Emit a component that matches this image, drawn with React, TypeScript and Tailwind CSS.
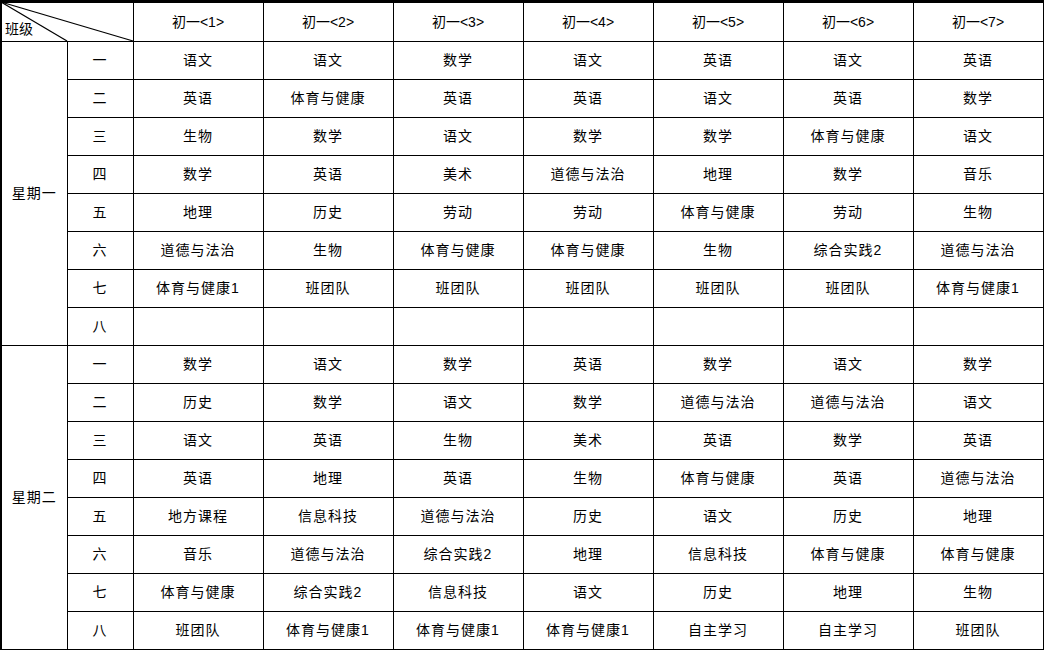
import React from "react";

const classes = ["初一<1>", "初一<2>", "初一<3>", "初一<4>", "初一<5>", "初一<6>", "初一<7>"];
const periods = ["一", "二", "三", "四", "五", "六", "七", "八"];

const schedule: { day: string; rows: string[][] }[] = [
  {
    day: "星期一",
    rows: [
      ["语文", "语文", "数学", "语文", "英语", "语文", "英语"],
      ["英语", "体育与健康", "英语", "英语", "语文", "英语", "数学"],
      ["生物", "数学", "语文", "数学", "数学", "体育与健康", "语文"],
      ["数学", "英语", "美术", "道德与法治", "地理", "数学", "音乐"],
      ["地理", "历史", "劳动", "劳动", "体育与健康", "劳动", "生物"],
      ["道德与法治", "生物", "体育与健康", "体育与健康", "生物", "综合实践2", "道德与法治"],
      ["体育与健康1", "班团队", "班团队", "班团队", "班团队", "班团队", "体育与健康1"],
      ["", "", "", "", "", "", ""],
    ],
  },
  {
    day: "星期二",
    rows: [
      ["数学", "语文", "数学", "英语", "数学", "语文", "数学"],
      ["历史", "数学", "语文", "数学", "道德与法治", "道德与法治", "语文"],
      ["语文", "英语", "生物", "美术", "英语", "数学", "英语"],
      ["英语", "地理", "英语", "生物", "体育与健康", "英语", "道德与法治"],
      ["地方课程", "信息科技", "道德与法治", "历史", "语文", "历史", "地理"],
      ["音乐", "道德与法治", "综合实践2", "地理", "信息科技", "体育与健康", "体育与健康"],
      ["体育与健康", "综合实践2", "信息科技", "语文", "历史", "地理", "生物"],
      ["班团队", "体育与健康1", "体育与健康1", "体育与健康1", "自主学习", "自主学习", "班团队"],
    ],
  },
];

const cell = "border border-black text-center align-middle p-0 whitespace-nowrap";

export default function App() {
  return (
    <div className="w-[1046px] h-[650px] overflow-hidden bg-white font-['Liberation_Sans','Noto_Sans_CJK_SC',sans-serif] text-[14px] tracking-[1px] text-black">
      <div className="relative w-[1044px]">
        <table className="table-fixed border-collapse w-[1043px]">
          <colgroup>
            <col className="w-[66px]" />
            <col className="w-[66px]" />
            {classes.map((c) => (
              <col key={c} className="w-[130px]" />
            ))}
          </colgroup>
          <thead>
            <tr className="h-[40px]">
              <th colSpan={2} className={`${cell} border-t-[3px] border-l-2 relative font-normal`}>
                <span className="absolute left-[3px] bottom-[1px] tracking-normal">班级</span>
              </th>
              {classes.map((c) => (
                <th key={c} className={`${cell} border-t-[3px] font-normal tracking-normal`}>
                  {c}
                </th>
              ))}
            </tr>
          </thead>
          <tbody>
            {schedule.map((section) =>
              section.rows.map((row, i) => (
                <tr key={section.day + i} className="h-[38px]">
                  {i === 0 && (
                    <td rowSpan={8} className={`${cell} border-l-2`}>
                      {section.day}
                    </td>
                  )}
                  <td className={cell}>{periods[i]}</td>
                  {row.map((s, j) => (
                    <td key={j} className={cell}>
                      {s}
                    </td>
                  ))}
                </tr>
              ))
            )}
          </tbody>
        </table>
        <svg className="absolute left-0 top-0 pointer-events-none" width="134" height="42" viewBox="0 0 134 42">
          <line x1="1" y1="2" x2="133" y2="41" stroke="black" strokeWidth="1.3" />
          <line x1="1" y1="2" x2="67" y2="41" stroke="black" strokeWidth="1.3" />
        </svg>
      </div>
    </div>
  );
}
